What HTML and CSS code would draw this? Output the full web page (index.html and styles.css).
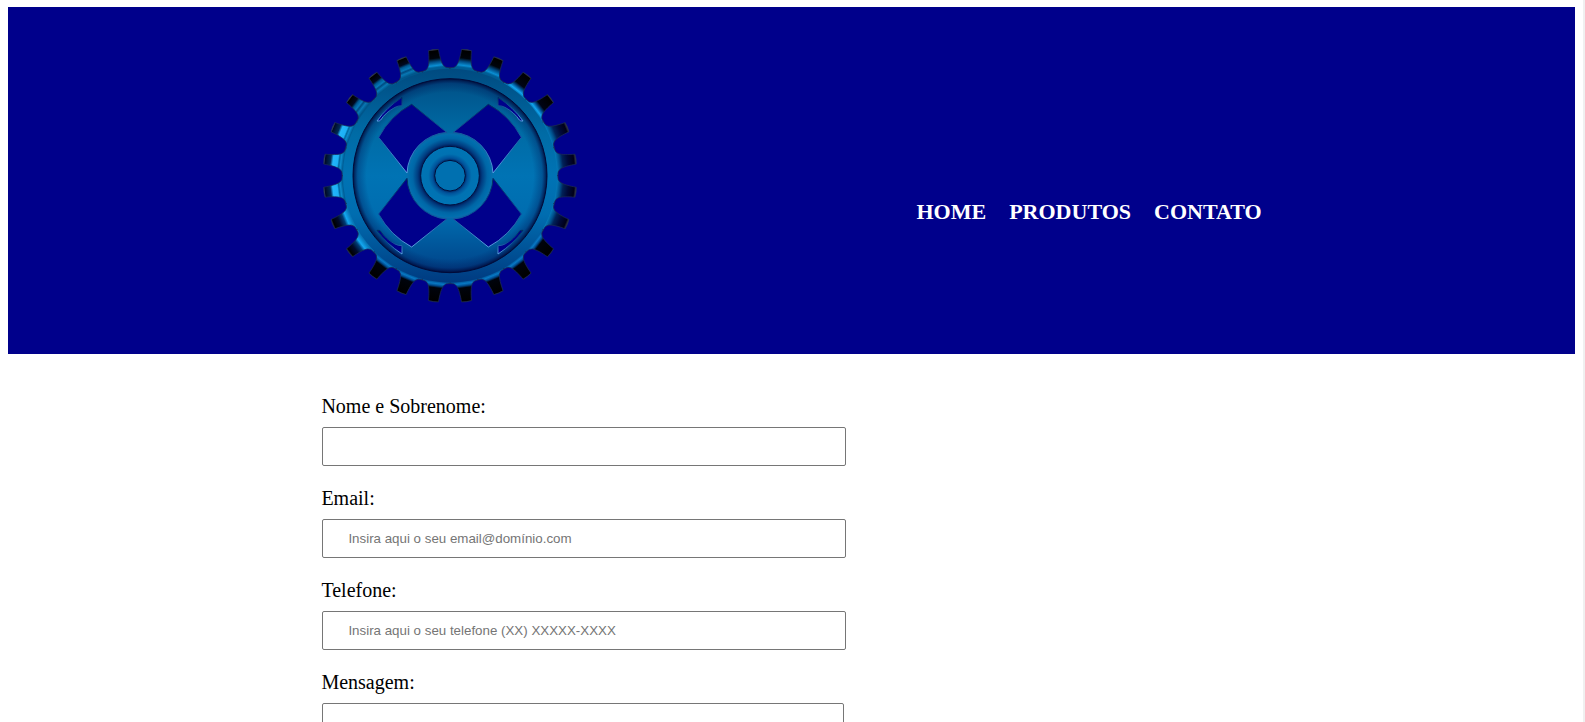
FILE: index.html
```html
<!DOCTYPE html>
<html lang="pt-br">
<head>
<meta charset="utf-8">
<title>Contato</title>
<link rel="stylesheet" href="styles.css">
</head>
<body>
<header class="header">
  <div class="header-box">
    <svg class="logo" viewBox="-384 -386 768 768" role="img" aria-label="Logo">
      <defs>
        <linearGradient id="body" gradientUnits="userSpaceOnUse" x1="0" y1="-322" x2="0" y2="322">
          <stop offset="0" stop-color="#004a80"/><stop offset=".3" stop-color="#006ba5"/><stop offset=".5" stop-color="#0073b4"/><stop offset=".68" stop-color="#006db0"/><stop offset="1" stop-color="#003a80"/>
        </linearGradient>
        <radialGradient id="rim" gradientUnits="userSpaceOnUse" cx="0" cy="0" r="291">
          <stop offset=".86" stop-color="#001050" stop-opacity="0"/><stop offset=".95" stop-color="#001050" stop-opacity=".3"/><stop offset="1" stop-color="#000430" stop-opacity=".85"/>
        </radialGradient>
        <radialGradient id="hub" gradientUnits="userSpaceOnUse" cx="0" cy="0" r="127">
          <stop offset=".68" stop-color="#00144f"/><stop offset=".76" stop-color="#003c80"/><stop offset=".88" stop-color="#0066a6"/><stop offset="1" stop-color="#0072b2"/>
        </radialGradient>
        <radialGradient id="ring" gradientUnits="userSpaceOnUse" cx="0" cy="0" r="88">
          <stop offset=".52" stop-color="#002a68"/><stop offset=".6" stop-color="#00529a"/><stop offset=".74" stop-color="#0072b2"/><stop offset="1" stop-color="#0074b5"/>
        </radialGradient>
        <linearGradient id="edge" x1="0" y1="0" x2="0" y2="1">
          <stop offset="0" stop-color="#00305f"/><stop offset=".5" stop-color="#1d5ea8"/><stop offset="1" stop-color="#5aa0e0"/>
        </linearGradient>
        <linearGradient id="edgeFlipped" x1="0" y1="1" x2="0" y2="0">
          <stop offset="0" stop-color="#00305f"/><stop offset=".5" stop-color="#0c4a92"/><stop offset="1" stop-color="#5aa0e0"/>
        </linearGradient>
        <linearGradient id="toothTop" x1="0" y1="0" x2="0" y2="1">
          <stop offset="0" stop-color="#4a4a54"/><stop offset=".06" stop-color="#000"/><stop offset=".36" stop-color="#00040c"/><stop offset=".5" stop-color="#004880"/><stop offset=".66" stop-color="#0a8fd4"/><stop offset=".74" stop-color="#006098"/><stop offset="1" stop-color="#004f84"/>
        </linearGradient>
        <linearGradient id="toothUpperRight" x1="0" y1="0" x2="0" y2="1">
          <stop offset="0" stop-color="#4a4a54"/><stop offset=".06" stop-color="#000"/><stop offset=".5" stop-color="#000414"/><stop offset=".62" stop-color="#004c8a"/><stop offset=".75" stop-color="#12a4ee"/><stop offset=".85" stop-color="#0070ac"/><stop offset="1" stop-color="#005c94"/>
        </linearGradient>
        <linearGradient id="toothUpperLeft" x1="0" y1="0" x2="0" y2="1">
          <stop offset="0" stop-color="#606068"/><stop offset=".06" stop-color="#000"/><stop offset=".28" stop-color="#000820"/><stop offset=".38" stop-color="#005890"/><stop offset=".5" stop-color="#0779b8"/><stop offset=".57" stop-color="#004a80"/><stop offset=".66" stop-color="#0878b4"/><stop offset=".78" stop-color="#00558a"/><stop offset="1" stop-color="#00639c"/>
        </linearGradient>
        <linearGradient id="toothLeft" x1="0" y1="0" x2="0" y2="1">
          <stop offset="0" stop-color="#566078"/><stop offset=".06" stop-color="#000a28"/><stop offset=".28" stop-color="#002a58"/><stop offset=".38" stop-color="#22b5fa"/><stop offset=".57" stop-color="#1cb0f5"/><stop offset=".63" stop-color="#0068a0"/><stop offset=".7" stop-color="#0c8aca"/><stop offset=".8" stop-color="#005f98"/><stop offset="1" stop-color="#0070ae"/>
        </linearGradient>
        <linearGradient id="toothLowerLeft" x1="0" y1="0" x2="0" y2="1">
          <stop offset="0" stop-color="#303040"/><stop offset=".07" stop-color="#000"/><stop offset=".3" stop-color="#000a2c"/><stop offset=".5" stop-color="#003c74"/><stop offset=".62" stop-color="#14a8f0"/><stop offset=".8" stop-color="#0878b8"/><stop offset="1" stop-color="#0068a6"/>
        </linearGradient>
        <linearGradient id="toothRight" x1="0" y1="0" x2="0" y2="1">
          <stop offset="0" stop-color="#40404c"/><stop offset=".1" stop-color="#000018"/><stop offset=".35" stop-color="#00093a"/><stop offset=".56" stop-color="#002258"/><stop offset=".68" stop-color="#00508c"/><stop offset=".82" stop-color="#0478b6"/><stop offset="1" stop-color="#006ca8"/>
        </linearGradient>
        <linearGradient id="toothBottom" x1="0" y1="0" x2="0" y2="1">
          <stop offset="0" stop-color="#202028"/><stop offset=".05" stop-color="#000"/><stop offset=".58" stop-color="#00030c"/><stop offset=".67" stop-color="#004c90"/><stop offset=".75" stop-color="#0878c4"/><stop offset=".84" stop-color="#00589c"/><stop offset="1" stop-color="#004488"/>
        </linearGradient>
        <path id="tooth" d="M-15-380Q0-383 15-380C16-360 18-340 24-330Q29-321 42-321L41-308Q0-314-41-308L-42-321Q-29-321-24-330C-18-340-16-360-15-380Z"/>
        <path id="window" d="M10-130L115-214A243 243 0 0 1 214-115L129-8A128 128 0 0 0 10-130Z"/>
        <path id="slot" d="M144-235V-210Q156-210 165-205Q193-190 208-167Q211-163 219-164Q191-204 144-235Z"/>
      </defs>
      <g stroke="#1c2c50" stroke-width="2">
        <g fill="url(#toothTop)"><use href="#tooth" transform="rotate(-7.5)"/><use href="#tooth" transform="rotate(7.5)"/><use href="#tooth" transform="rotate(22.5)"/></g>
        <g fill="url(#toothUpperRight)"><use href="#tooth" transform="rotate(37.5)"/><use href="#tooth" transform="rotate(52.5)"/></g>
        <g fill="url(#toothRight)"><use href="#tooth" transform="rotate(67.5)"/><use href="#tooth" transform="rotate(82.5)"/><use href="#tooth" transform="rotate(97.5)"/><use href="#tooth" transform="rotate(112.5)"/></g>
        <g fill="url(#toothBottom)"><use href="#tooth" transform="rotate(127.5)"/><use href="#tooth" transform="rotate(142.5)"/><use href="#tooth" transform="rotate(157.5)"/><use href="#tooth" transform="rotate(172.5)"/><use href="#tooth" transform="rotate(187.5)"/><use href="#tooth" transform="rotate(202.5)"/><use href="#tooth" transform="rotate(217.5)"/></g>
        <g fill="url(#toothLowerLeft)"><use href="#tooth" transform="rotate(232.5)"/><use href="#tooth" transform="rotate(247.5)"/></g>
        <g fill="url(#toothLeft)"><use href="#tooth" transform="rotate(262.5)"/><use href="#tooth" transform="rotate(277.5)"/><use href="#tooth" transform="rotate(292.5)"/></g>
        <g fill="url(#toothUpperLeft)"><use href="#tooth" transform="rotate(307.5)"/><use href="#tooth" transform="rotate(322.5)"/><use href="#tooth" transform="rotate(337.5)"/></g>
      </g>
      <circle r="321" fill="url(#body)"/>
      <circle r="291" fill="url(#rim)" stroke="#000a38" stroke-width="3"/>
      <g fill="#00008b" stroke="url(#edge)" stroke-width="3">
        <use href="#window"/><use href="#window" transform="scale(-1 1)"/>
        <use href="#slot"/><use href="#slot" transform="scale(-1 1)"/>
      </g>
      <g fill="#00008b" stroke="url(#edgeFlipped)" stroke-width="3">
        <use href="#window" transform="scale(1 -1)"/><use href="#window" transform="scale(-1 -1)"/>
        <use href="#slot" transform="scale(1 -1)"/><use href="#slot" transform="scale(-1 -1)"/>
      </g>
      <circle r="126" fill="url(#hub)" stroke="#1468a8" stroke-width="2"/>
      <circle r="88" fill="url(#ring)" stroke="#001040" stroke-width="3"/>
      <circle r="46" fill="#0070b0" stroke="#000c38" stroke-width="3"/>
    </svg>
    <nav class="nav">
      <a class="nav-link">Home</a>
      <a class="nav-link">Produtos</a>
      <a class="nav-link">Contato</a>
    </nav>
  </div>
</header>
<main class="main">
  <form class="form">
    <label class="label" for="nome">Nome e Sobrenome:</label>
    <input class="field" id="nome" type="text">
    <label class="label" for="email">Email:</label>
    <input class="field" id="email" type="email" placeholder="Insira aqui o seu email@domínio.com">
    <label class="label" for="telefone">Telefone:</label>
    <input class="field" id="telefone" type="tel" placeholder="Insira aqui o seu telefone (XX) XXXXX-XXXX">
    <label class="label" for="mensagem">Mensagem:</label>
    <textarea class="message" id="mensagem"></textarea>
  </form>
</main>
</body>
</html>
```
FILE: styles.css
```css
* {
  box-sizing: border-box;
}

body {
  height: 722px;
  margin: 0;
  padding: 7px 8px 0;
  overflow: hidden;
  border-right: 2px solid #f0f0f0;
  background: #fff;
  font-family: "Liberation Serif", "Times New Roman", serif;
}

.header {
  height: 347px;
  background: #00008b;
}

.header-box {
  display: flex;
  justify-content: space-between;
  width: 60%;
  margin: 0 auto;
  padding-top: 40px;
}

.logo {
  width: 256px;
  height: 256px;
  margin-left: 1px;
}

.nav {
  display: flex;
  gap: 23px;
  padding-top: 152px;
}

.nav-link {
  color: #fff;
  font-size: 22px;
  font-weight: bold;
  line-height: 26px;
  text-transform: uppercase;
}

.main {
  width: 60%;
  margin: 0 auto;
  padding-top: 41px;
}

.form {
  display: flex;
  flex-direction: column;
  align-items: flex-start;
}

.label {
  margin-bottom: 9px;
  font-size: 20px;
  line-height: 23px;
}

.field,
.message {
  margin-left: 1px;
  border: 1px solid #767676;
  border-radius: 2px;
  background: #fff;
  font-family: "Liberation Sans", Arial, sans-serif;
  font-size: 13.333px;
}

.field {
  width: 524px;
  height: 39px;
  margin-bottom: 21px;
  padding: 0 25px;
}

.field::placeholder {
  color: #757575;
}

.message {
  width: 522px;
  height: 120px;
  resize: none;
}
```
